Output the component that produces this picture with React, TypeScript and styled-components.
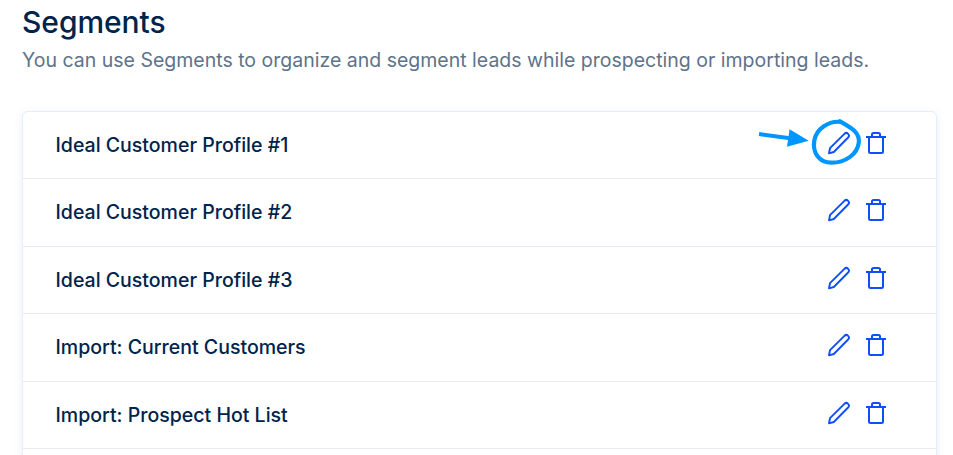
import React from "react";
import styled, { createGlobalStyle } from "styled-components";

const GlobalStyle = createGlobalStyle`
  * { box-sizing: border-box; }
  html, body { margin: 0; background: #fff; }
  body { height: 455px; overflow: hidden; font-family: Inter, "Liberation Sans", sans-serif; }
`;

const Page = styled.main`
  height: 455px;
  overflow: hidden;
  padding: 4px 16px 0 22px;
`;

const Title = styled.h1`
  margin: 0;
  font-size: 30px;
  line-height: 37px;
  font-weight: 450;
  letter-spacing: -0.05px;
  color: #00234b;
`;

const Subtitle = styled.p`
  margin: 5px 0 0;
  font-size: 19.5px;
  line-height: 28px;
  font-weight: 400;
  color: #5e7389;
  white-space: nowrap;
`;

const Card = styled.ul`
  list-style: none;
  margin: 36.6px 0 0;
  padding: 0;
  height: 500px;
  border: 1px solid #e6edf5;
  border-radius: 6px;
  box-shadow: 0 2px 8px rgba(30, 100, 220, 0.1);
`;

const Row = styled.li`
  display: flex;
  align-items: center;
  justify-content: space-between;
  height: 67.5px;
  padding: 0 48px 0 32.5px;
  border-bottom: 1px solid #e8ecf0;
`;

const Name = styled.span`
  font-size: 19.55px;
  line-height: 28px;
  font-weight: 470;
  color: #00234b;
  white-space: nowrap;
`;

const Actions = styled.div`
  display: flex;
  gap: 13px;
  margin-top: -4px;
`;

const IconButton = styled.button`
  position: relative;
  display: flex;
  width: 24px;
  height: 24px;
  padding: 0;
  border: 0;
  background: none;
  color: #0f4ff5;
`;

const Highlight = styled.svg`
  position: absolute;
  left: -72px;
  top: -16px;
  pointer-events: none;
`;

const PencilIcon = () => (
  <svg width="24" height="24" viewBox="0 0 24 24" fill="none" stroke="currentColor" strokeWidth="1.9" strokeLinejoin="round">
    <path d="M2 22.3 3 17.2 17.4 2.8a2.6 2.6 0 0 1 3.7 3.7L6.8 21Z" />
  </svg>
);

const TrashIcon = () => (
  <svg width="24" height="24" viewBox="0 0 24 24" fill="none" stroke="currentColor" strokeWidth="2">
    <path d="M2 6H22M5 6V20.5Q5 22 6.5 22H17.5Q19 22 19 20.5V6M8 6V3.5Q8 2 9.5 2H14.5Q16 2 16 3.5V6" />
  </svg>
);

const Callout = () => (
  <Highlight width="110" height="56" viewBox="755 115 110 56" fill="none" aria-hidden="true">
    <path d="M759 134 790 138.2" stroke="#0096ff" strokeWidth="4" />
    <path d="M789.6 129.3 808.7 140.8 787 146.8Z" fill="#0096ff" />
    <path
      d="M840 121.8C828 121 816.5 129 814.4 140C812 153 819.5 162.7 831.5 162.7C845 162.7 857.5 154.5 858.8 142.5C859.8 132.5 852 128 840 121.3"
      stroke="#0096ff"
      strokeWidth="4.2"
      strokeLinecap="round"
    />
  </Highlight>
);

const segments = [
  "Ideal Customer Profile #1",
  "Ideal Customer Profile #2",
  "Ideal Customer Profile #3",
  "Import: Current Customers",
  "Import: Prospect Hot List",
];

export default function App() {
  return (
    <>
      <GlobalStyle />
      <Page>
        <Title>Segments</Title>
        <Subtitle>You can use Segments to organize and segment leads while prospecting or importing leads.</Subtitle>
        <Card>
          {segments.map((name, index) => (
            <Row key={name}>
              <Name>{name}</Name>
              <Actions>
                <IconButton aria-label={`Edit ${name}`}>
                  <PencilIcon />
                  {index === 0 && <Callout />}
                </IconButton>
                <IconButton aria-label={`Delete ${name}`}>
                  <TrashIcon />
                </IconButton>
              </Actions>
            </Row>
          ))}
        </Card>
      </Page>
    </>
  );
}
